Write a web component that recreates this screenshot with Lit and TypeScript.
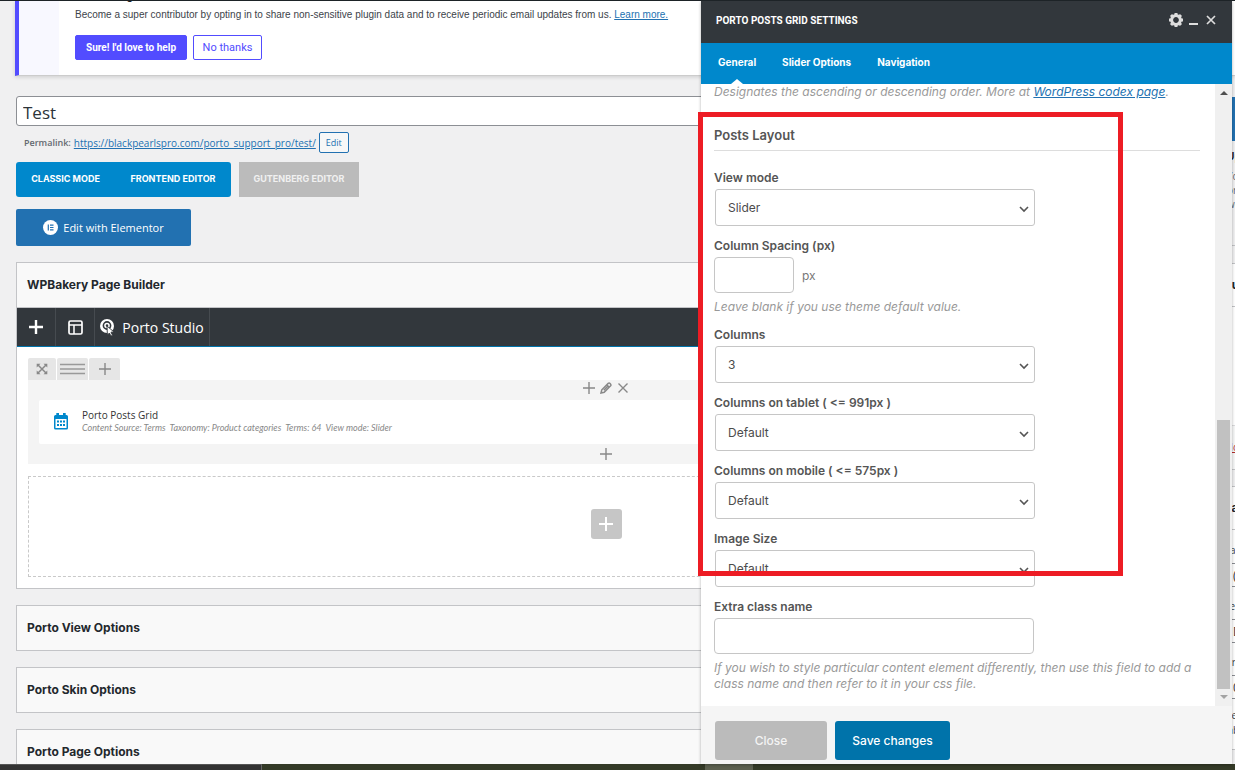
import { LitElement, html, css, svg } from "lit";
import { customElement, property } from "lit/decorators.js";

const UI = css`"Open Sans", "Noto Sans", sans-serif`;
const GEO = css`Inter, "Open Sans", sans-serif`;

const plus = (size: number, weight: number) => svg`
  <svg width=${size} height=${size} viewBox="0 0 ${size} ${size}" aria-hidden="true">
    <path d="M${size / 2} 0V${size}M0 ${size / 2}H${size}" stroke="currentColor" stroke-width=${weight} fill="none"/>
  </svg>`;

@customElement("select-field")
class SelectField extends LitElement {
  @property() label = "";
  @property() value = "";
  static styles = css`
    :host { display: block; max-width: 321px; font-family: ${GEO}; }
    label { display: block; font-size: 12px; line-height: 20px; font-weight: 600; color: #555; margin-bottom: 1px; }
    .box { position: relative; margin-left: 1px; }
    select {
      appearance: none; display: block; width: 100%; height: 37px; box-sizing: border-box;
      border: 1px solid #c6c6c6; border-radius: 3px; background: #fff; padding: 0 32px 0 12px;
      font: 400 12px ${GEO}; color: #4c4c4c;
    }
    svg { position: absolute; right: 6px; top: 16px; pointer-events: none; }
  `;
  render() {
    return html`<label for="s">${this.label}</label>
      <div class="box">
        <select id="s"><option>${this.value}</option></select>
        <svg width="10" height="8" viewBox="0 0 10 8" aria-hidden="true"><path d="M1 2L5 6L9 2" fill="none" stroke="#555" stroke-width="1.6"/></svg>
      </div>`;
  }
}

@customElement("settings-panel")
class SettingsPanel extends LitElement {
  static styles = css`
    :host { display: flex; flex-direction: column; background: #fff; font-family: ${GEO}; box-shadow: 0 1px 3px rgba(0,0,0,.3); }
    * { box-sizing: border-box; }
    header { height: 42px; flex: none; display: flex; align-items: center; padding: 0 16px 4px 15px; background: #32373c; color: #fff; }
    h2 { margin: 0; flex: 1; font: 700 10px Roboto, sans-serif; }
    button { font-family: inherit; cursor: pointer; border: 0; }
    .icon { background: none; padding: 0; color: #ddd; display: flex; margin-left: 6px; }
    .icon.shut { margin-left: 8px; }
    nav { height: 41px; flex: none; display: flex; background: #0088cc; padding-left: 4px; }
    nav a { position: relative; padding: 0 13px; line-height: 38px; font-size: 10px; font-weight: 700; color: #fff; text-decoration: none; }
    nav a.on::after { content: ""; position: absolute; bottom: 0; left: 50%; margin-left: -6px; border: 6px solid transparent; border-bottom: 5px solid #fff; border-top: 0; }
    .body { flex: 1; min-height: 0; display: flex; overflow: hidden; }
    .content { flex: 1; padding: 0 15px 0 13px; display: flex; flex-direction: column; }
    .hint { margin: 0; font-size: 12px; line-height: 16px; font-style: italic; color: #999; white-space: nowrap; }
    .hint.wrap { white-space: normal; margin-top: 6px; }
    .hint a { color: #2271b1; }
    h3 { margin: 24px 0 17px; font-size: 13px; line-height: 22px; padding-bottom: 4px; font-weight: 600; color: #555; border-bottom: 1px solid #ddd; }
    .fields { display: flex; flex-direction: column; gap: 10px; }
    label { display: block; font-size: 12px; line-height: 20px; font-weight: 600; color: #555; margin-bottom: 1px; }
    input { display: block; width: 320px; max-width: 100%; height: 36px; border: 1px solid #c6c6c6; border-radius: 4px; background: #fff; padding: 0 10px; font: 12px ${GEO}; }
    input.small { width: 80px; }
    .unit { display: flex; align-items: center; gap: 8px; font-size: 12px; color: #777; }
    .bar { width: 17px; flex: none; background: #f0f0f0; display: flex; flex-direction: column; align-items: center; padding: 7px 0; }
    .thumb { width: 13px; height: 269px; margin: auto 0 6px; background: #c1c1c1; }
    footer { flex: none; height: 58px; background: #f5f5f5; padding: 15px 0 4px 14px; display: flex; gap: 8px; }
    footer button { border-radius: 3px; color: #fff; font-size: 12px; font-weight: 500; width: 115px; background: #0073aa; }
    footer .close { width: 112px; background: #bbb; color: #f4f4f4; }
  `;
  render() {
    return html`
      <header>
        <h2>PORTO POSTS GRID SETTINGS</h2>
        <button class="icon" aria-label="Settings"><svg width="14" height="14" viewBox="-7 -7 14 14"><circle r="4.4" fill="none" stroke="currentColor" stroke-width="3"/><path d="M0-7V-4M0 7V4M-7 0H-4M7 0H4M-5-5L-3-3M5 5L3 3M-5 5L-3 3M5-5L3-3" stroke="currentColor" stroke-width="3"/></svg></button>
        <button class="icon" aria-label="Minimize"><svg width="9" height="14" viewBox="0 0 9 14"><path d="M0 11H9" stroke="currentColor" stroke-width="2"/></svg></button>
        <button class="icon shut" aria-label="Close panel"><svg width="10" height="10" viewBox="0 0 10 10"><path d="M1 1L9 9M9 1L1 9" stroke="currentColor" stroke-width="1.7"/></svg></button>
      </header>
      <nav><a class="on" href="#general">General</a><a href="#slider">Slider Options</a><a href="#nav">Navigation</a></nav>
      <div class="body">
        <div class="content">
          <p class="hint">Designates the ascending or descending order. More at <a href="#codex">WordPress codex page</a>.</p>
          <h3>Posts Layout</h3>
          <div class="fields">
            <select-field label="View mode" value="Slider"></select-field>
            <div>
              <label for="gap">Column Spacing (px)</label>
              <div class="unit"><input id="gap" class="small" type="text"><span>px</span></div>
              <p class="hint wrap">Leave blank if you use theme default value.</p>
            </div>
            <select-field label="Columns" value="3"></select-field>
            <select-field label="Columns on tablet ( &lt;= 991px )" value="Default"></select-field>
            <select-field label="Columns on mobile ( &lt;= 575px )" value="Default"></select-field>
            <select-field label="Image Size" value="Default"></select-field>
            <div>
              <label for="cls">Extra class name</label>
              <input id="cls" type="text">
              <p class="hint wrap">If you wish to style particular content element differently, then use this field to add a class name and then refer to it in your css file.</p>
            </div>
          </div>
        </div>
        <div class="bar">
          <svg width="8" height="4" viewBox="0 0 8 4"><path d="M0 4L4 0L8 4Z" fill="#505050"/></svg>
          <div class="thumb"></div>
          <svg width="8" height="4" viewBox="0 0 8 4"><path d="M0 0L4 4L8 0Z" fill="#a3a3a3"/></svg>
        </div>
      </div>
      <footer><button class="close">Close</button><button>Save changes</button></footer>`;
  }
}

@customElement("app-root")
class AppRoot extends LitElement {
  static styles = css`
    :host { display: flex; flex-direction: column; position: relative; height: 100vh; overflow: hidden; background: #f0f0f1; font-family: ${UI}; color: #3c434a; border-top: 1px solid #1d2327; box-sizing: border-box; }
    * { box-sizing: border-box; }
    button { font-family: inherit; cursor: pointer; border: 0; padding: 0; }
    a { color: #2271b1; }
    .notice { flex: none; height: 75px; margin-left: 15px; display: flex; align-items: flex-end; overflow: hidden; background: #fff; border-left: 4px solid #524cff; border-bottom: 1px solid #ccc; box-shadow: 0 1px 4px rgba(0,0,0,.15); }
    .strip { width: 40px; height: 100%; background: #f8f8ff; }
    .msg { padding: 0 0 15px 16px; }
    .msg h3 { margin: 0 0 3px; font: 700 12px/16px Roboto, sans-serif; color: #1d2327; }
    .msg p { margin: 0 0 11px; font: 10px/18px "Liberation Sans", sans-serif; white-space: nowrap; }
    .acts { display: flex; gap: 6px; font-family: Roboto, sans-serif; }
    .acts button { height: 25px; width: 112px; border-radius: 2px; font-size: 10px; font-weight: 700; color: #fff; background: #524cff; border: 1px solid #524cff; }
    .acts .no { width: 69px; font-size: 11px; font-weight: 400; color: #524cff; background: #fff; }
    .cols { flex: 1; min-height: 0; display: flex; gap: 20px; padding: 20px 0 0 16px; overflow: hidden; }
    main { flex: 1; min-width: 0; }
    .title { display: block; width: 100%; height: 30px; border: 1px solid #8c8f94; border-radius: 3px; padding: 2px 6px 0; font: 17px ${UI}; color: #2c3338; background: #fff; }
    .perma { display: flex; align-items: center; height: 21px; margin: 6px 0 9px 8px; font-size: 10px; gap: 3px; color: #646970; }
    .perma b { font-size: 9px; font-weight: 600; }
    .perma button { width: 30px; height: 21px; font-size: 9px; border: 1px solid #2271b1; border-radius: 2px; background: #f6f7f7; color: #2271b1; }
    .modes { display: flex; height: 35px; gap: 8px; font-family: ${GEO}; }
    .modes button { height: 35px; padding-bottom: 2px; font-size: 9px; font-weight: 700; color: #fff; background: none; }
    .pair { display: flex; width: 215px; border-radius: 3px; background: #0088cc; }
    .pair .a { width: 99px; }
    .pair .b { flex: 1; }
    .modes .gut { width: 120px; background: #bbb; color: #f0f0f0; }
    .elementor { display: flex; align-items: center; justify-content: center; gap: 5px; width: 175px; height: 37px; margin: 12px 0 16px; border-radius: 2px; background: #2271b1; color: #fff; font-size: 11px; }
    .postbox { background: #fff; border: 1px solid #c3c4c7; margin-bottom: 16px; }
    .postbox h2 { margin: 0; padding-left: 10px; font: 700 12px/44px ${GEO}; color: #23282d; background: #f9f9f9; }
    .builder h2 { border-bottom: 1px solid #c3c4c7; }
    .tools { display: flex; height: 39px; background: #32373c; border-bottom: 1px solid #0073aa; }
    .tools button { display: flex; align-items: center; justify-content: center; width: 39px; gap: 7px; color: #fff; background: none; border-right: 1px solid #464b50; font-size: 14px; }
    .tools .studio { width: 115px; }
    .canvas { padding: 11px; }
    .rowctl { display: flex; gap: 1px; }
    .rowctl button { height: 22px; width: 28px; display: flex; align-items: center; justify-content: center; background: #e6e6e6; color: #888; border-radius: 2px 2px 0 0; }
    .rowctl .wide { width: 31px; }
    .row { background: #f4f4f4; padding: 0 11px; color: #888; }
    .ctl { height: 20px; display: flex; align-items: center; justify-content: center; gap: 5px; padding-bottom: 4px; }
    .ctl button, .drop button { display: flex; background: none; color: inherit; }
    .ctl.end { padding: 0; }
    .item { display: flex; align-items: center; height: 44px; gap: 14px; padding: 0 0 2px 15px; background: #fff; border-radius: 2px; }
    .item strong { display: block; font-size: 10px; line-height: 13px; font-weight: 400; color: #333; }
    .item em { display: block; font-family: Lato, sans-serif; font-size: 9px; line-height: 11px; color: #888; white-space: pre; }
    .drop { height: 101px; margin-top: 12px; border: 1px dashed #c9c9c9; display: flex; align-items: center; justify-content: center; padding-bottom: 6px; }
    .drop button { width: 31px; height: 30px; align-items: center; justify-content: center; border-radius: 3px; background: #c6c6c6; color: #fff; }
    aside { width: 19px; flex: none; overflow: hidden; white-space: nowrap; font-size: 10px; }
    .promo { height: 44px; margin-top: 1px; background: #2271b1; }
    .tips { height: 105px; padding: 8px 0 0 11px; line-height: 14px; color: #646970; border-bottom: 1px solid #c3c4c7; margin-bottom: 17px; }
    .tips b { display: block; color: #1d2327; margin-bottom: 6px; }
    .side { width: 280px; background: #fff; border: 1px solid #c3c4c7; margin-bottom: 16px; }
    .side h2 { margin: 0; padding-left: 7px; font: 700 12px/42px ${GEO}; color: #23282d; border-bottom: 1px solid #c3c4c7; }
    .minor { height: 119px; border-bottom: 1px solid #dcdcde; }
    .major { height: 43px; padding-left: 7px; line-height: 42px; background: #f6f7f7; }
    .major a { color: #b32d2e; }
    .attrs { height: 219px; padding: 10px 7px 0; }
    .attrs label { display: block; line-height: 20px; margin-bottom: 3px; }
    .attrs select, .attrs input { display: block; appearance: none; width: 180px; height: 24px; border: 1px solid #8c8f94; border-radius: 3px; background: #fff; padding: 0 8px; margin-bottom: 9px; font: 12px ${UI}; color: #2c3338; }
    .attrs p { margin: 0; line-height: 15px; }
    .task { flex: none; height: 6px; display: flex; background: #343a27; }
    .task .search { width: 262px; background: #333; border-top: 1px solid #555; border-right: 1px solid #666; }
    .task .app { width: 48px; margin-left: 443px; background: #5c604f; }
    settings-panel { position: absolute; top: 0; right: 3px; bottom: 6px; width: 531px; }
    .frame { position: absolute; left: 698px; top: 111px; width: 425px; height: 464px; border: 5px solid #ed1c24; pointer-events: none; }
  `;
  render() {
    return html`
      <section class="notice">
        <div class="strip"></div>
        <div class="msg">
          <h3>Love using Elementor?</h3>
          <p>Become a super contributor by opting in to share non-sensitive plugin data and to receive periodic email updates from us. <a href="#more">Learn more.</a></p>
          <div class="acts"><button>Sure! I'd love to help</button><button class="no">No thanks</button></div>
        </div>
      </section>
      <div class="cols">
        <main>
          <input class="title" type="text" aria-label="Title" value="Test">
          <div class="perma"><b>Permalink:</b><a href="#permalink">https://blackpearlspro.com/porto_support_pro/test/</a><button>Edit</button></div>
          <div class="modes">
            <div class="pair"><button class="a">CLASSIC MODE</button><button class="b">FRONTEND EDITOR</button></div>
            <button class="gut">GUTENBERG EDITOR</button>
          </div>
          <button class="elementor"><svg width="15" height="15" viewBox="0 0 15 15"><circle cx="7.5" cy="7.5" r="7.5" fill="#fff"/><path d="M5.3 4.5V10.5M7 5.2H10.5M7 7.5H10.5M7 9.8H10.5" stroke="#2271b1" stroke-width="1.2"/></svg>Edit with Elementor</button>
          <section class="postbox builder">
            <h2>WPBakery Page Builder</h2>
            <div class="tools">
              <button aria-label="Add element">${plus(14, 2.4)}</button>
              <button aria-label="Templates"><svg width="15" height="15" viewBox="0 0 15 15"><rect x="1" y="1" width="13" height="13" rx="1.5" fill="none" stroke="#fff" stroke-width="1.7"/><path d="M1 5H14M6 5V14" stroke="#fff" stroke-width="1.5"/></svg></button>
              <button class="studio"><svg width="15" height="18" viewBox="0 0 15 18"><circle cx="7" cy="8" r="7" fill="#fff"/><circle cx="7" cy="7.5" r="3.6" fill="none" stroke="#32373c" stroke-width="1.6"/><circle cx="7" cy="7.5" r="1.2" fill="#32373c"/><path d="M7 8L14 14L11 14.2L12.6 17.4L10.9 18L9.4 15L7.4 17Z" fill="#fff" stroke="#32373c" stroke-width=".9"/></svg>Porto Studio</button>
            </div>
            <div class="canvas">
              <div class="rowctl">
                <button aria-label="Move row"><svg width="12" height="12" viewBox="0 0 12 12"><path d="M2 2L10 10M10 2L2 10" stroke="currentColor" stroke-width="1.5"/><path d="M.7 4.5V.7H4.5ZM7.5.7H11.3V4.5ZM.7 7.5V11.3H4.5ZM11.3 7.5V11.3H7.5Z" fill="currentColor"/></svg></button>
                <button class="wide" aria-label="Columns"><svg width="25" height="12" viewBox="0 0 25 12"><path d="M0 1.5H25M0 6H25M0 10.5H25" stroke="#999" stroke-width="1.4"/></svg></button>
                <button class="wide" aria-label="Add column">${plus(12, 1.4)}</button>
              </div>
              <div class="row">
                <div class="ctl">
                  <button aria-label="Prepend">${plus(12, 1.4)}</button>
                  <button aria-label="Edit column"><svg width="12" height="12" viewBox="0 0 12 12"><path d="M1 11L1.8 7.8L8.2 1.4Q9.2.6 10.3 1.7Q11.4 2.8 10.6 3.8L4.2 10.2ZM7 3L9 5M3.8 8.2L7.5 4.5" fill="none" stroke="currentColor" stroke-width="1.5"/></svg></button>
                  <button aria-label="Delete column"><svg width="12" height="12" viewBox="0 0 12 12"><path d="M1.5 1.5L10.5 10.5M10.5 1.5L1.5 10.5" stroke="currentColor" stroke-width="1.4"/></svg></button>
                </div>
                <div class="item">
                  <svg width="14" height="17" viewBox="0 0 14 17"><path fill-rule="evenodd" d="M1.5 2H12.5Q14 2 14 3.5V15Q14 16.5 12.5 16.5H1.5Q0 16.5 0 15V3.5Q0 2 1.5 2ZM1.5 6V15H12.5V6Z" fill="#0088cc"/><path d="M2.3 0H5V4H2.3ZM9 0H11.7V4H9Z" fill="#0088cc"/><path d="M3 7.5H5V9.5H3ZM6 7.5H8V9.5H6ZM9 7.5H11V9.5H9ZM3 11H5V13H3ZM6 11H8V13H6ZM9 11H11V13H9Z" fill="#0088cc"/></svg>
                  <div><strong>Porto Posts Grid</strong><em>Content Source: Terms  Taxonomy: Product categories  Terms: 64  View mode: Slider</em></div>
                </div>
                <div class="ctl end"><button aria-label="Append">${plus(12, 1.4)}</button></div>
              </div>
              <div class="drop"><button aria-label="Add row">${plus(14, 2)}</button></div>
            </div>
          </section>
          <section class="postbox"><h2>Porto View Options</h2></section>
          <section class="postbox"><h2>Porto Skin Options</h2></section>
          <section class="postbox"><h2>Porto Page Options</h2></section>
        </main>
        <aside>
          <div class="promo"></div>
          <div class="tips"><b>Up</b>You<br>or<br>we</div>
          <section class="side">
            <h2>Publish</h2>
            <div class="minor"></div>
            <div class="major"><a href="#trash">Move to Trash</a></div>
          </section>
          <section class="side">
            <h2>Page Attributes</h2>
            <div class="attrs">
              <label for="par">Parent</label><select id="par"><option>(no parent)</option></select>
              <label for="tpl">Template</label><select id="tpl"><option>Default template</option></select>
              <label for="ord">Order</label><input id="ord" type="text" value="0">
              <p>Need help? Use the Help<br>tab above the screen title.</p>
            </div>
          </section>
        </aside>
      </div>
      <div class="task"><div class="search"></div><div class="app"></div></div>
      <settings-panel></settings-panel>
      <div class="frame"></div>`;
  }
}
